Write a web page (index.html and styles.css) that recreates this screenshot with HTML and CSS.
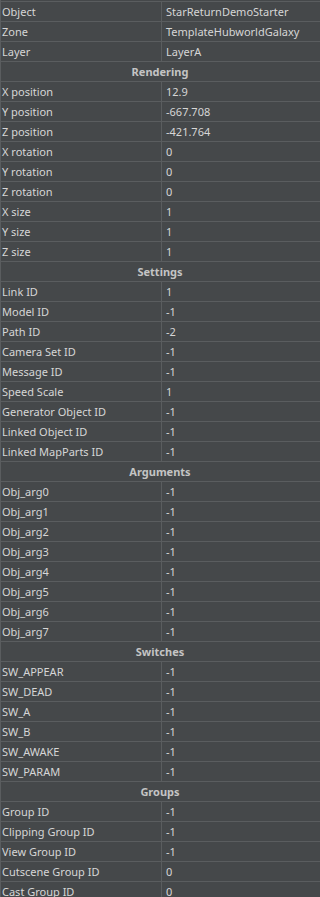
FILE: index.html
```html
<!DOCTYPE html>
<html>
<head>
<meta charset="utf-8">
<link rel="stylesheet" href="styles.css">
</head>
<body>
<div class="grid">
  <div class="row"><div class="k">Object</div><div class="v">StarReturnDemoStarter</div></div>
  <div class="row"><div class="k">Zone</div><div class="v">TemplateHubworldGalaxy</div></div>
  <div class="row"><div class="k">Layer</div><div class="v">LayerA</div></div>
  <div class="row head">Rendering</div>
  <div class="row"><div class="k">X position</div><div class="v">12.9</div></div>
  <div class="row"><div class="k">Y position</div><div class="v">-667.708</div></div>
  <div class="row"><div class="k">Z position</div><div class="v">-421.764</div></div>
  <div class="row"><div class="k">X rotation</div><div class="v">0</div></div>
  <div class="row"><div class="k">Y rotation</div><div class="v">0</div></div>
  <div class="row"><div class="k">Z rotation</div><div class="v">0</div></div>
  <div class="row"><div class="k">X size</div><div class="v">1</div></div>
  <div class="row"><div class="k">Y size</div><div class="v">1</div></div>
  <div class="row"><div class="k">Z size</div><div class="v">1</div></div>
  <div class="row head">Settings</div>
  <div class="row"><div class="k">Link ID</div><div class="v">1</div></div>
  <div class="row"><div class="k">Model ID</div><div class="v">-1</div></div>
  <div class="row"><div class="k">Path ID</div><div class="v">-2</div></div>
  <div class="row"><div class="k">Camera Set ID</div><div class="v">-1</div></div>
  <div class="row"><div class="k">Message ID</div><div class="v">-1</div></div>
  <div class="row"><div class="k">Speed Scale</div><div class="v">1</div></div>
  <div class="row"><div class="k">Generator Object ID</div><div class="v">-1</div></div>
  <div class="row"><div class="k">Linked Object ID</div><div class="v">-1</div></div>
  <div class="row"><div class="k">Linked MapParts ID</div><div class="v">-1</div></div>
  <div class="row head">Arguments</div>
  <div class="row"><div class="k">Obj_arg0</div><div class="v">-1</div></div>
  <div class="row"><div class="k">Obj_arg1</div><div class="v">-1</div></div>
  <div class="row"><div class="k">Obj_arg2</div><div class="v">-1</div></div>
  <div class="row"><div class="k">Obj_arg3</div><div class="v">-1</div></div>
  <div class="row"><div class="k">Obj_arg4</div><div class="v">-1</div></div>
  <div class="row"><div class="k">Obj_arg5</div><div class="v">-1</div></div>
  <div class="row"><div class="k">Obj_arg6</div><div class="v">-1</div></div>
  <div class="row"><div class="k">Obj_arg7</div><div class="v">-1</div></div>
  <div class="row head">Switches</div>
  <div class="row"><div class="k">SW_APPEAR</div><div class="v">-1</div></div>
  <div class="row"><div class="k">SW_DEAD</div><div class="v">-1</div></div>
  <div class="row"><div class="k">SW_A</div><div class="v">-1</div></div>
  <div class="row"><div class="k">SW_B</div><div class="v">-1</div></div>
  <div class="row"><div class="k">SW_AWAKE</div><div class="v">-1</div></div>
  <div class="row"><div class="k">SW_PARAM</div><div class="v">-1</div></div>
  <div class="row head">Groups</div>
  <div class="row"><div class="k">Group ID</div><div class="v">-1</div></div>
  <div class="row"><div class="k">Clipping Group ID</div><div class="v">-1</div></div>
  <div class="row"><div class="k">View Group ID</div><div class="v">-1</div></div>
  <div class="row"><div class="k">Cutscene Group ID</div><div class="v">0</div></div>
  <div class="row"><div class="k">Cast Group ID</div><div class="v">0</div></div>
</div>
</body>
</html>
```
FILE: styles.css
```css
html, body {
  margin: 0;
  padding: 0;
  background: #45484a;
  height: 897px;
  overflow: hidden;
}
.grid {
  padding-top: 1px;
  border-left: 1px solid #5a5d5f;
  font-family: "Noto Sans", "Open Sans", sans-serif;
  font-size: 11px;
  color: #d6d6d6;
}
.row {
  display: grid;
  grid-template-columns: 161px 1fr;
  height: 19px;
  border-top: 1px solid #5a5d5f;
  line-height: 19px;
}
.k {
  padding-left: 1px;
  border-right: 1px solid #5a5d5f;
  white-space: nowrap;
  overflow: hidden;
}
.v {
  padding-left: 4px;
  white-space: nowrap;
}
.head {
  display: block;
  text-align: center;
  font-weight: bold;
  color: #c4c4c4;
  padding-right: 1px;
}
```
